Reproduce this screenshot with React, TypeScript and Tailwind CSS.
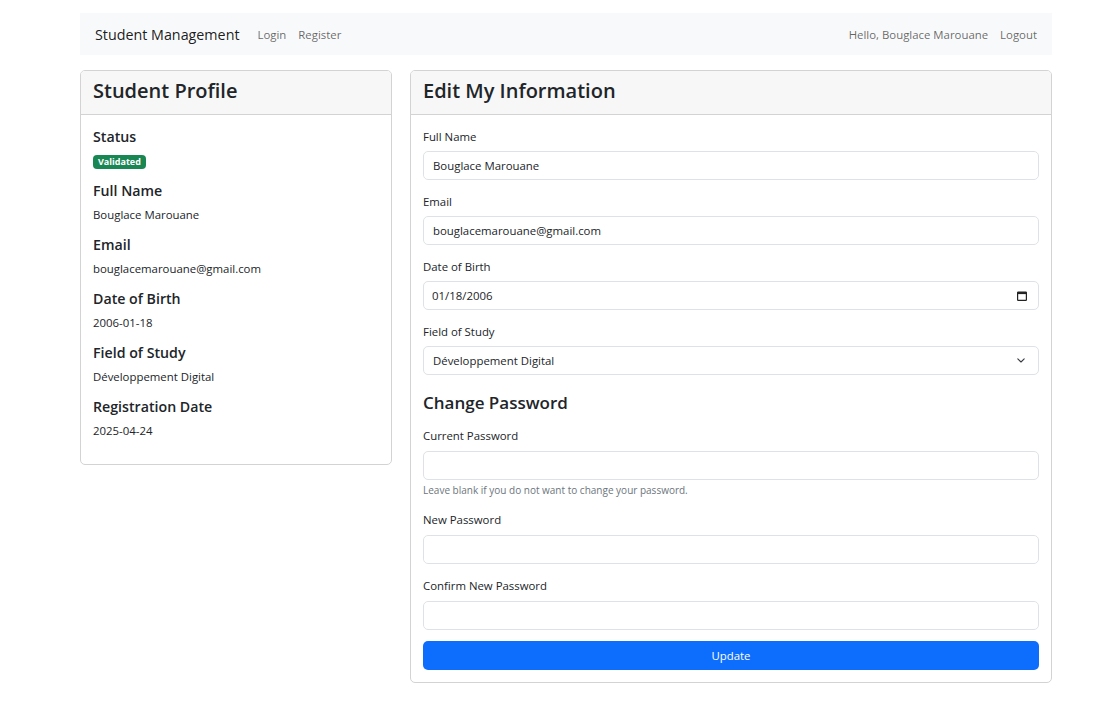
import React from "react";

const font = { fontFamily: '"Open Sans", "Noto Sans", sans-serif' };

function Field({
  label,
  children,
  help,
  labelGap = "mb-[6px]",
}: {
  label: string;
  children: React.ReactNode;
  help?: string;
  labelGap?: string;
}) {
  return (
    <div className="mb-[13px]">
      <div className={`text-[11.4px] leading-[17px] text-[#212529] ${labelGap}`}>{label}</div>
      {children}
      {help && <div className="text-[10px] leading-[15px] mt-[3px] text-[#6c757d]">{help}</div>}
    </div>
  );
}

function Input({ value }: { value?: string }) {
  return (
    <div className="h-[29px] border border-[#dee2e6] rounded-[5px] bg-white px-[9px] flex items-center text-[11.4px] text-[#212529]">
      {value}
    </div>
  );
}

function Info({ label, value }: { label: string; value: React.ReactNode }) {
  return (
    <div>
      <div className="text-[14.2px] leading-[19px] mb-[5px] font-semibold text-[#212529]">{label}</div>
      <div className="text-[11.4px] leading-[19px] mb-[11px] text-[#212529]">{value}</div>
    </div>
  );
}

export default function App() {
  return (
    <div className="min-h-[703px] bg-white text-[#212529]" style={font}>
      <div className="ml-[80px] w-[972px] pt-[13px]">
        <nav className="h-[42px] bg-[#f8f9fa] flex items-center pl-[15px] pr-[15px] pt-[1px]">
          <span className="text-[14.3px] text-black/90 mr-[18px]">Student Management</span>
          <span className="text-[11.4px] text-black/60 mr-[12px]">Login</span>
          <span className="text-[11.4px] text-black/60">Register</span>
          <div className="flex-1" />
          <span className="text-[11.4px] text-black/60 mr-[12px]">Hello, Bouglace Marouane</span>
          <span className="text-[11.4px] text-black/60">Logout</span>
        </nav>

        <div className="flex gap-[18px] mt-[15px] items-start">
          <div className="w-[312px] border border-[#d3d3d3] rounded-[5px] bg-white overflow-hidden">
            <div className="h-[44px] bg-[#f7f7f7] border-b border-[#d3d3d3] px-[12px] pb-[3px] flex items-center">
              <span className="text-[20px] font-semibold leading-none">Student Profile</span>
            </div>
            <div className="px-[12px] pt-[12px] pb-[13px]">
              <Info
                label="Status"
                value={
                  <span className="inline-flex items-center h-[14px] px-[5px] rounded-[4px] bg-[#198754] text-white text-[9px] font-bold leading-none align-middle">
                    Validated
                  </span>
                }
              />
              <Info label="Full Name" value="Bouglace Marouane" />
              <Info label="Email" value="bouglacemarouane@gmail.com" />
              <Info label="Date of Birth" value="2006-01-18" />
              <Info label="Field of Study" value="Développement Digital" />
              <Info label="Registration Date" value="2025-04-24" />
            </div>
          </div>

          <div className="w-[642px] border border-[#d3d3d3] rounded-[5px] bg-white overflow-hidden">
            <div className="h-[44px] bg-[#f7f7f7] border-b border-[#d3d3d3] px-[12px] pb-[3px] flex items-center">
              <span className="text-[20px] font-semibold leading-none">Edit My Information</span>
            </div>
            <div className="px-[12px] pt-[13px] pb-[12px]">
              <Field label="Full Name">
                <Input value="Bouglace Marouane" />
              </Field>
              <Field label="Email">
                <Input value="bouglacemarouane@gmail.com" />
              </Field>
              <Field label="Date of Birth">
                <div className="h-[29px] border border-[#dee2e6] rounded-[5px] bg-white pl-[8px] pr-[11px] flex items-center text-[11.4px]">
                  <span className="flex-1">01/18/2006</span>
                  <svg width="10" height="10" viewBox="0 0 10 10" fill="none">
                    <rect x="0.6" y="1.1" width="8.8" height="8.3" rx="0.6" stroke="#222" strokeWidth="1.2" />
                    <rect x="0.6" y="1.1" width="8.8" height="2" fill="#222" />
                  </svg>
                </div>
              </Field>
              <Field label="Field of Study">
                <div className="h-[29px] border border-[#dee2e6] rounded-[5px] bg-white pl-[9px] pr-[13px] flex items-center text-[11.4px]">
                  <span className="flex-1">Développement Digital</span>
                  <svg width="8" height="5" viewBox="0 0 8 5" fill="none">
                    <path d="M0.8 0.8l3.2 3.2 3.2-3.2" stroke="#343a40" strokeWidth="1.1" strokeLinecap="round" strokeLinejoin="round" />
                  </svg>
                </div>
              </Field>
              <div className="text-[17px] leading-[23px] font-semibold mt-[16px] mb-[13px]">Change Password</div>
              <Field
                label="Current Password"
                labelGap="mb-[7px]"
                help="Leave blank if you do not want to change your password."
              >
                <Input />
              </Field>
              <Field label="New Password" labelGap="mb-[7px]">
                <Input />
              </Field>
              <div className="mb-[11px]">
                <div className="text-[11.4px] leading-[17px] mb-[7px]">Confirm New Password</div>
                <Input />
              </div>
              <button className="w-full h-[29px] rounded-[5px] bg-[#0d6efd] text-white text-[11.4px] flex items-center justify-center">
                Update
              </button>
            </div>
          </div>
        </div>
      </div>
    </div>
  );
}
